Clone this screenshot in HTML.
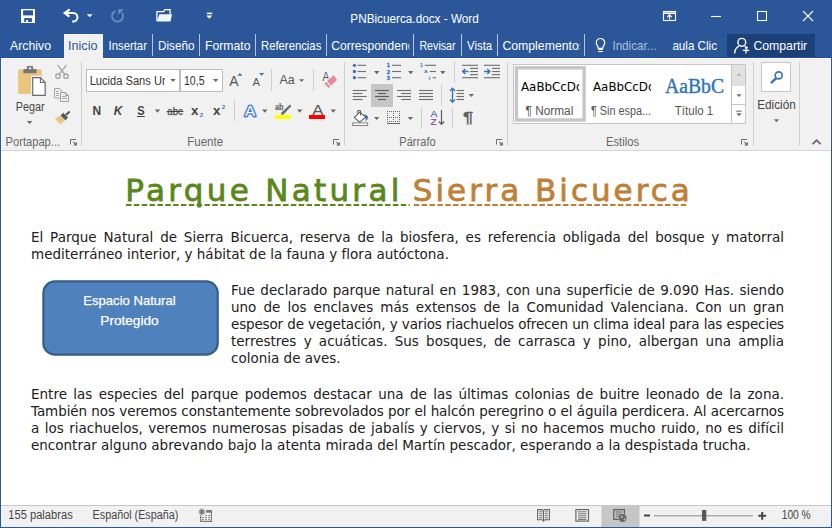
<!DOCTYPE html>
<html lang="es"><head><meta charset="utf-8"><title>PNBicuerca.docx - Word</title>
<style>
*{box-sizing:border-box;margin:0;padding:0}
html,body{width:832px;height:528px;overflow:hidden;background:#fff}
body{position:relative;font-family:"Liberation Sans",sans-serif}
#top{position:absolute;left:0;top:0;width:832px;height:58px;background:#2b579a}
#ribbon{position:absolute;left:1px;top:58px;width:830px;height:93px;background:#f1f1f1;border-bottom:1px solid #d4d4d4}
#bl{position:absolute;left:0;top:57px;width:1px;height:471px;background:#2b579a}
#br{position:absolute;left:831px;top:57px;width:1px;height:471px;background:#2b579a}
#bb{position:absolute;left:0;top:527px;width:832px;height:1px;background:#2b579a}
#status{position:absolute;left:1px;top:505px;width:830px;height:22px;background:#f1f1f1;border-top:1px solid #c8c8c8}
.d{position:absolute;font-family:"DejaVu Sans","Liberation Sans",sans-serif;font-size:13.5px;color:#202020;height:17px;line-height:17px;white-space:nowrap}
.j{white-space:normal;text-align:justify;text-align-last:justify}
#ov{position:absolute;left:0;top:0;width:832px;height:528px}
</style></head><body>
<div id="top"></div><div id="ribbon"></div><div id="status"></div>
<div id="bl"></div><div id="br"></div><div id="bb"></div>
<div class="d j" style="left:31px;top:228.5px;width:753px;">El Parque Natural de Sierra Bicuerca, reserva de la biosfera, es referencia obligada del bosque y matorral</div>
<div class="d" style="left:31px;top:245.5px">mediterráneo interior, y hábitat de la fauna y flora autóctona.</div>
<div class="d j" style="left:231px;top:281.5px;width:553px;">Fue declarado parque natural en 1983, con una superficie de 9.090 Has. siendo</div>
<div class="d j" style="left:231px;top:298.5px;width:553px;">uno de los enclaves más extensos de la Comunidad Valenciana. Con un gran</div>
<div class="d j" style="left:231px;top:315.5px;width:553px;letter-spacing:-0.16px;">espesor de vegetación, y varios riachuelos ofrecen un clima ideal para las especies</div>
<div class="d j" style="left:231px;top:332.5px;width:553px;">terrestres y acuáticas. Sus bosques, de carrasca y pino, albergan una amplia</div>
<div class="d" style="left:231px;top:349.5px">colonia de aves.</div>
<div class="d j" style="left:31px;top:385.5px;width:753px;">Entre las especies del parque podemos destacar una de las últimas colonias de buitre leonado de la zona.</div>
<div class="d j" style="left:31px;top:402.5px;width:753px;letter-spacing:-0.085px;">También nos veremos constantemente sobrevolados por el halcón peregrino o el águila perdicera. Al acercarnos</div>
<div class="d j" style="left:31px;top:419.5px;width:753px;">a los riachuelos, veremos numerosas pisadas de jabalís y ciervos, y si no hacemos mucho ruido, no es difícil</div>
<div class="d" style="left:31px;top:436.5px">encontrar alguno abrevando bajo la atenta mirada del Martín pescador, esperando a la despistada trucha.</div>
<svg id="ov" width="832" height="528" viewBox="0 0 832 528">
<g id="qat" fill="none" stroke="#fff">
<rect x="21" y="9" width="14" height="14" rx=".6" fill="#fff" stroke="none"/>
<rect x="23.100" y="10.300" width="9.900" height="5.100" fill="#2b579a" stroke="none"/>
<rect x="24.200" y="18.100" width="7.700" height="3.900" fill="#2b579a" stroke="none"/>
<rect x="26" y="20.100" width="2.100" height="2" fill="#fff" stroke="none"/>
<path d="M69.700 9.300L64.600 13L69.400 16.700M65 13H73.200A4.250 4.250 0 0 1 73.200 21.500H72.200" stroke-width="2.100"/>
</g>
<path d="M86.8 14.2h5.8l-2.9 3.1z" fill="#fff"/>
<path d="M115.600 10.900A5.500 5.500 0 1 0 121.700 12.500" fill="none" stroke="#6a8bc2" stroke-width="1.800"/><path d="M118.200 9.200h5.600l-5.600 5.600z" fill="#6a8bc2"/>
<path d="M156.900 21V11.600h6.600l1.400-1.900h5.200v4.300" fill="none" stroke="#fff" stroke-width="1.300"/>
<path d="M159.400 14.200h12.700l-1.600 7.400h-13.700z" fill="#f4f4f4"/>
<path d="M206.900 13.400h5.400" stroke="#fff" stroke-width="1.500"/>
<path d="M206.3 15.6h6l-3.0 3.2z" fill="#fff"/>
<g fill="none" stroke="#fff" stroke-width="1.1">
<rect x="663.5" y="11.5" width="12" height="9"/><path d="M663.5 13.2h12" stroke-width="1.6"/><path d="M669.5 19.5v-4.5M667.3 17l2.2-2.2l2.2 2.2"/>
<path d="M711 16.5h10"/>
<rect x="757.5" y="11.5" width="9" height="9"/>
<path d="M803 11l10 10M813 11l-10 10"/>
</g>
<text x="350.3" y="22.8" textLength="128.5" lengthAdjust="spacingAndGlyphs" font-family="Liberation Sans, sans-serif" font-size="12" font-weight="400" fill="#fff">PNBicuerca.docx - Word</text>
<rect x="64" y="34" width="39" height="24.500" fill="#f1f1f1"/>
<text x="10" y="50" textLength="41" lengthAdjust="spacingAndGlyphs" font-family="Liberation Sans, sans-serif" font-size="12.8" font-weight="400" fill="#fff">Archivo</text>
<text x="68" y="50" textLength="29.5" lengthAdjust="spacingAndGlyphs" font-family="Liberation Sans, sans-serif" font-size="12.8" font-weight="400" fill="#2b579a">Inicio</text>
<text x="108.6" y="50" textLength="38.3" lengthAdjust="spacingAndGlyphs" font-family="Liberation Sans, sans-serif" font-size="12.8" font-weight="400" fill="#fff">Insertar</text>
<text x="158" y="50" textLength="36.5" lengthAdjust="spacingAndGlyphs" font-family="Liberation Sans, sans-serif" font-size="12.8" font-weight="400" fill="#fff">Diseño</text>
<text x="205" y="50" textLength="45.5" lengthAdjust="spacingAndGlyphs" font-family="Liberation Sans, sans-serif" font-size="12.8" font-weight="400" fill="#fff">Formato</text>
<text x="261" y="50" textLength="60.3" lengthAdjust="spacingAndGlyphs" font-family="Liberation Sans, sans-serif" font-size="12.8" font-weight="400" fill="#fff">Referencias</text>
<text x="419.4" y="50" textLength="36.2" lengthAdjust="spacingAndGlyphs" font-family="Liberation Sans, sans-serif" font-size="12.8" font-weight="400" fill="#fff">Revisar</text>
<text x="467" y="50" textLength="25.2" lengthAdjust="spacingAndGlyphs" font-family="Liberation Sans, sans-serif" font-size="12.8" font-weight="400" fill="#fff">Vista</text>
<text x="612.4" y="50" textLength="44" lengthAdjust="spacingAndGlyphs" font-family="Liberation Sans, sans-serif" font-size="12.8" font-weight="400" fill="#aebfde">Indicar...</text>
<text x="672.4" y="50" textLength="44.6" lengthAdjust="spacingAndGlyphs" font-family="Liberation Sans, sans-serif" font-size="12.8" font-weight="400" fill="#fff">aula Clic</text>
<clipPath id="c1"><rect x="330" y="34" width="79.4" height="24"/></clipPath>
<g clip-path="url(#c1)"><text x="331.2" y="50" textLength="92" lengthAdjust="spacingAndGlyphs" font-family="Liberation Sans, sans-serif" font-size="12.8" font-weight="400" fill="#fff">Correspondencia</text></g>
<clipPath id="c2"><rect x="500" y="34" width="79.6" height="24"/></clipPath>
<g clip-path="url(#c2)"><text x="502.4" y="50" textLength="82.5" lengthAdjust="spacingAndGlyphs" font-family="Liberation Sans, sans-serif" font-size="12.8" font-weight="400" fill="#fff">Complementos</text></g>
<rect x="152.0" y="34" width="1" height="22" fill="#b8c6e0"/>
<rect x="199.0" y="34" width="1" height="22" fill="#b8c6e0"/>
<rect x="255.0" y="34" width="1" height="22" fill="#b8c6e0"/>
<rect x="326.0" y="34" width="1" height="22" fill="#b8c6e0"/>
<rect x="413.0" y="34" width="1" height="22" fill="#b8c6e0"/>
<rect x="461.0" y="34" width="1" height="22" fill="#b8c6e0"/>
<rect x="497.0" y="34" width="1" height="22" fill="#b8c6e0"/>
<rect x="584.0" y="34" width="1" height="22" fill="#b8c6e0"/>
<g fill="none" stroke="#fff" stroke-width="1.200"><path d="M598.300 48.300c0-2-2-3-2-5.600a4.200 4.200 0 0 1 8.400 0c0 2.600-2 3.600-2 5.600z"/><path d="M598.200 51.500h4.600"/></g><rect x="598.200" y="48" width="4.600" height="1.900" fill="#fff"/>
<rect x="727" y="34" width="88" height="23" fill="#1c4078"/>
<g fill="none" stroke="#fff" stroke-width="1.400"><circle cx="741.800" cy="42.300" r="3.900"/><path d="M734.600 53.400c.300-4.100 2.200-6.500 4.700-7.300M744.600 46.300c1.300.400 2.300 1.100 3.100 2"/><path d="M742.800 50.400h6.400M746 47.200v6.400" stroke-width="1.300"/></g>
<text x="753.4" y="50" textLength="53.8" lengthAdjust="spacingAndGlyphs" font-family="Liberation Sans, sans-serif" font-size="12.8" font-weight="400" fill="#fff">Compartir</text>
<rect x="1" y="58" width="63" height="1" fill="#fbfaf6"/><rect x="103" y="58" width="728" height="1" fill="#fbfaf6"/><rect x="1" y="58" width="1" height="92" fill="#fbfaf6"/><rect x="830" y="58" width="1" height="92" fill="#fbfaf6"/>
<rect x="103" y="57" width="728" height="1" fill="#22509a"/><rect x="1" y="57" width="63" height="1" fill="#22509a"/>
<rect x="18.200" y="69.200" width="23.600" height="24.800" rx="1.800" fill="#ebc47f"/>
<path d="M23.400 73.200v-3.300a.8.8 0 0 1 .8-.8h2.700v-2.200a.8.8 0 0 1 .8-.8h4.600a.8.8 0 0 1 .8.800v2.200h2.700a.8.8 0 0 1 .8.800v3.300z" fill="#777"/>
<rect x="28.800" y="67.400" width="2.400" height="1.800" fill="#f1f1f1"/>
<path d="M31 75.800h10l5.900 5.900v15.400h-15.900z" fill="#f1f1f1"/>
<path d="M32.700 77.700h7.700l4.800 4.800v12.800h-12.500z" fill="#fff" stroke="#6a6a6a" stroke-width="1.200"/>
<path d="M40.400 77.700v4.800h4.800" fill="none" stroke="#6a6a6a" stroke-width="1.100"/>
<text x="15.7" y="110.5" textLength="28.8" lengthAdjust="spacingAndGlyphs" font-family="Liberation Sans, sans-serif" font-size="12" font-weight="400" fill="#444444">Pegar</text>
<path d="M26.9 121h5.4l-2.7 3z" fill="#666"/>
<g fill="none" stroke="#a3a3a3" stroke-width="1.3"><path d="M57.600 65.200l7.300 9.300M66.400 65.200l-7.300 9.300"/><circle cx="58" cy="76.200" r="2.200"/><circle cx="66" cy="76.200" r="2.200"/></g>
<g fill="#f1f1f1" stroke="#a3a3a3" stroke-width="1"><path d="M54.500 88.500h5l2.500 2.500v7h-7.500z"/><path d="M60.500 92.500h5l3 3v6h-8z"/><path d="M65.500 92.500v3h3" fill="none"/><path d="M56 91.500h3M56 93.500h3M56 95.500h3M62 96.500h4.500M62 98.500h5" fill="none" stroke-width=".9"/></g>
<path d="M54.800 118.700l6.600-3.400 4.300 4.400-5.300 4.600z" fill="#ebc47f"/>
<path d="M60.600 115.400l2.500-2.600 5 4.700-2.600 2.700z" fill="#595959"/>
<path d="M65.200 114.300l3.700-3.600 1.500 1.500-3.700 3.600z" fill="#595959"/>
<text x="5.6" y="146" textLength="54.5" lengthAdjust="spacingAndGlyphs" font-family="Liberation Sans, sans-serif" font-size="12" font-weight="400" fill="#666">Portapap...</text>
<path d="M70.5 144.6v-5.100h5.600" fill="none" stroke="#6e6e6e" stroke-width="1"/><path d="M77 141.8v3.800h-3.800z" fill="#6e6e6e"/><path d="M73.4 142.0l2.600 2.600" stroke="#6e6e6e" stroke-width="1.100" fill="none"/>
<rect x="81.0" y="62" width="1" height="83.5" fill="#cfcfcf"/>
<rect x="86.500" y="69.500" width="93" height="22" fill="#fff" stroke="#bdbdbd"/>
<rect x="180.500" y="69.500" width="42" height="22" fill="#fff" stroke="#bdbdbd"/>
<clipPath id="c3"><rect x="88" y="70" width="77" height="21"/></clipPath>
<g clip-path="url(#c3)"><text x="89.7" y="85" textLength="105" lengthAdjust="spacingAndGlyphs" font-family="Liberation Sans, sans-serif" font-size="12.5" font-weight="400" fill="#333">Lucida Sans Unicode</text></g>
<path d="M170.3 78.9h5.4l-2.7 3.2z" fill="#686868"/>
<text x="184" y="85" textLength="20.5" lengthAdjust="spacingAndGlyphs" font-family="Liberation Sans, sans-serif" font-size="12.5" font-weight="400" fill="#333">10,5</text>
<path d="M213.0 78.9h5.4l-2.7 3.2z" fill="#686868"/>
<text x="229.3" y="85.5" textLength="9.3" lengthAdjust="spacingAndGlyphs" font-family="Liberation Sans, sans-serif" font-size="14.5" font-weight="400" fill="#555">A</text>
<path d="M237.300 75.800l2.600-2.900 2.600 2.900z" fill="#3b73b9"/>
<text x="252.5" y="85.5" textLength="7.4" lengthAdjust="spacingAndGlyphs" font-family="Liberation Sans, sans-serif" font-size="11.5" font-weight="400" fill="#555">A</text>
<path d="M259 72.900h5.200l-2.600 2.900z" fill="#3b73b9"/>
<rect x="271.0" y="69" width="1" height="22" fill="#cfcfcf"/>
<text x="279.5" y="84.2" textLength="15.2" lengthAdjust="spacingAndGlyphs" font-family="Liberation Sans, sans-serif" font-size="13" font-weight="400" fill="#555">Aa</text>
<path d="M299 79.2h5.2l-2.6 2.8z" fill="#6f6f6f"/>
<rect x="313.0" y="69" width="1" height="22" fill="#cfcfcf"/>
<text x="322.6" y="81.2" textLength="6.8" lengthAdjust="spacingAndGlyphs" font-family="Liberation Sans, sans-serif" font-size="12" font-weight="400" fill="#555">A</text>
<path d="M333.800 74.900l3.600 4.900-8.800 8.300-4.600-4.900z" fill="#f1f1f1" stroke="#f1f1f1" stroke-width="1.200"/>
<path d="M333.800 75.200l3.300 4.700-6 5.700-4-4.500z" fill="#e8879c"/><path d="M326.300 81.900l4 4.500-1.800 1.600-4.200-4.700z" fill="#e8879c"/>
<text x="92.6" y="114.8" textLength="8.6" lengthAdjust="spacingAndGlyphs" font-family="Liberation Sans, sans-serif" font-size="12.5" font-weight="700" fill="#444">N</text>
<text x="113.8" y="114.8" textLength="8.6" lengthAdjust="spacingAndGlyphs" font-family="Liberation Sans, sans-serif" font-size="12.5" font-weight="700" fill="#444" font-style="italic">K</text>
<text x="137.2" y="114.8" textLength="7.4" lengthAdjust="spacingAndGlyphs" font-family="Liberation Sans, sans-serif" font-size="12.5" font-weight="700" fill="#444">S</text>
<rect x="137" y="116" width="7.800" height="1" fill="#444"/>
<path d="M154.8 109.5h5.4l-2.7 3.2z" fill="#686868"/>
<text x="167.3" y="114.8" textLength="15.5" lengthAdjust="spacingAndGlyphs" font-family="Liberation Sans, sans-serif" font-size="11.5" font-weight="400" fill="#444" stroke="#444" stroke-width=".250">abc</text>
<rect x="166.700" y="111" width="16.700" height="1" fill="#444"/>
<text x="191" y="114.9" textLength="7.4" lengthAdjust="spacingAndGlyphs" font-family="Liberation Sans, sans-serif" font-size="13" font-weight="700" fill="#444">x</text>
<text x="199.7" y="117.1" textLength="3.4" lengthAdjust="spacingAndGlyphs" font-family="Liberation Sans, sans-serif" font-size="5.9" font-weight="700" fill="#3b73b9">2</text>
<text x="213.1" y="114.9" textLength="7.4" lengthAdjust="spacingAndGlyphs" font-family="Liberation Sans, sans-serif" font-size="13" font-weight="700" fill="#444">x</text>
<text x="221.8" y="109" textLength="3.4" lengthAdjust="spacingAndGlyphs" font-family="Liberation Sans, sans-serif" font-size="5.9" font-weight="700" fill="#3b73b9">2</text>
<rect x="234.0" y="100" width="1" height="21.5" fill="#cfcfcf"/>
<text x="245" y="115.500" textLength="10.200" lengthAdjust="spacingAndGlyphs" font-family="Liberation Sans, sans-serif" font-size="14.500" font-weight="400" fill="none" stroke="#9cc0ea" stroke-width="4.200" stroke-opacity=".45" stroke-linejoin="round">A</text>
<text x="245" y="115.500" textLength="10.200" lengthAdjust="spacingAndGlyphs" font-family="Liberation Sans, sans-serif" font-size="14.500" font-weight="400" fill="#fff" stroke="#3f7cc6" stroke-width="2.500" stroke-linejoin="round" paint-order="stroke">A</text>
<path d="M262.1 109.5h5.4l-2.7 3.2z" fill="#686868"/>
<text x="275" y="110.2" textLength="8.6" lengthAdjust="spacingAndGlyphs" font-family="Liberation Sans, sans-serif" font-size="9.5" font-weight="700" fill="#555">ab</text>
<path d="M289.600 103.900l2.200 1.800-8.400 9.200-3.400-1.300z" fill="#f1f1f1"/>
<path d="M289.900 104.600l1.500 1.400-7.600 8.200-3 .9.900-2.900z" fill="#6a6a6a"/>
<rect x="275" y="115" width="16" height="4" fill="#ffff00"/>
<path d="M297.0 109.5h5.4l-2.7 3.2z" fill="#686868"/>
<text x="312.3" y="114.6" textLength="11.2" lengthAdjust="spacingAndGlyphs" font-family="Liberation Sans, sans-serif" font-size="14" font-weight="400" fill="#555">A</text>
<rect x="309" y="115" width="16" height="4" fill="#ff0000"/>
<path d="M330.6 109.5h5.4l-2.7 3.2z" fill="#686868"/>
<text x="187.3" y="146" textLength="35.8" lengthAdjust="spacingAndGlyphs" font-family="Liberation Sans, sans-serif" font-size="12" font-weight="400" fill="#666">Fuente</text>
<path d="M333.5 144.6v-5.100h5.600" fill="none" stroke="#6e6e6e" stroke-width="1"/><path d="M340 141.8v3.800h-3.800z" fill="#6e6e6e"/><path d="M336.4 142.0l2.600 2.600" stroke="#6e6e6e" stroke-width="1.100" fill="none"/>
<rect x="344.0" y="62" width="1" height="83.5" fill="#cfcfcf"/>
<circle cx="354.400" cy="65.3" r="1.650" fill="#3b73b9"/>
<rect x="357.6" y="64.75" width="8.4" height="1.1" fill="#6f6f6f"/>
<circle cx="354.400" cy="71.5" r="1.650" fill="#3b73b9"/>
<rect x="357.6" y="70.95" width="8.4" height="1.1" fill="#6f6f6f"/>
<circle cx="354.400" cy="77.7" r="1.650" fill="#3b73b9"/>
<rect x="357.6" y="77.15" width="8.4" height="1.1" fill="#6f6f6f"/>
<path d="M374.1 71.0h5.4l-2.7 3.2z" fill="#686868"/>
<text x="386.8" y="67.4" textLength="3.2" lengthAdjust="spacingAndGlyphs" font-family="Liberation Sans, sans-serif" font-size="5.9" font-weight="700" fill="#3b73b9" stroke="#3b73b9" stroke-width=".300">1</text>
<rect x="392" y="64.75000000000001" width="9" height="1.1" fill="#6f6f6f"/>
<text x="386.8" y="73.6" textLength="3.2" lengthAdjust="spacingAndGlyphs" font-family="Liberation Sans, sans-serif" font-size="5.9" font-weight="700" fill="#3b73b9" stroke="#3b73b9" stroke-width=".300">2</text>
<rect x="392" y="70.95" width="9" height="1.1" fill="#6f6f6f"/>
<text x="386.8" y="79.8" textLength="3.2" lengthAdjust="spacingAndGlyphs" font-family="Liberation Sans, sans-serif" font-size="5.9" font-weight="700" fill="#3b73b9" stroke="#3b73b9" stroke-width=".300">3</text>
<rect x="392" y="77.15" width="9" height="1.1" fill="#6f6f6f"/>
<path d="M408.0 71.0h5.4l-2.7 3.2z" fill="#686868"/>
<text x="420" y="67.4" textLength="3" lengthAdjust="spacingAndGlyphs" font-family="Liberation Sans, sans-serif" font-size="5.9" font-weight="700" fill="#3b73b9">1</text>
<rect x="424.8" y="64.75" width="11.2" height="1.1" fill="#6f6f6f"/>
<text x="424.3" y="73.4" textLength="3.2" lengthAdjust="spacingAndGlyphs" font-family="Liberation Sans, sans-serif" font-size="6" font-weight="700" fill="#3b73b9">a</text>
<rect x="429.8" y="70.95" width="6.2" height="1.1" fill="#6f6f6f"/>
<text x="428.8" y="79.8" textLength="1.6" lengthAdjust="spacingAndGlyphs" font-family="Liberation Sans, sans-serif" font-size="6" font-weight="700" fill="#3b73b9">i</text>
<rect x="432.6" y="77.15" width="3.4" height="1.1" fill="#6f6f6f"/>
<path d="M440.1 71.0h5.4l-2.7 3.2z" fill="#686868"/>
<rect x="454.0" y="61.5" width="1" height="21.0" fill="#cfcfcf"/>
<rect x="462" y="64.75" width="16" height="1.1" fill="#6f6f6f"/><rect x="462" y="77.15" width="16" height="1.1" fill="#6f6f6f"/><rect x="470" y="67.85000000000001" width="8" height="1.1" fill="#6f6f6f"/><rect x="470" y="70.95" width="8" height="1.1" fill="#6f6f6f"/><rect x="470" y="74.05" width="8" height="1.1" fill="#6f6f6f"/><path d="M468.5 71.500h-5.500M465.3 69l-2.600 2.500 2.600 2.500" fill="none" stroke="#3b73b9" stroke-width="1.500"/>
<rect x="484" y="64.75" width="16" height="1.1" fill="#6f6f6f"/><rect x="484" y="77.15" width="16" height="1.1" fill="#6f6f6f"/><rect x="492" y="67.85000000000001" width="8" height="1.1" fill="#6f6f6f"/><rect x="492" y="70.95" width="8" height="1.1" fill="#6f6f6f"/><rect x="492" y="74.05" width="8" height="1.1" fill="#6f6f6f"/><path d="M484 71.500h5.500M487.3 69l2.600 2.500-2.600 2.500" fill="none" stroke="#3b73b9" stroke-width="1.500"/>
<rect x="371" y="84" width="22" height="23" fill="#c6c6c6"/>
<rect x="352.7" y="89.95" width="14.0" height="1.1" fill="#6f6f6f"/>
<rect x="375" y="89.95" width="14" height="1.1" fill="#5e5e5e"/>
<rect x="397" y="89.95" width="14" height="1.1" fill="#6f6f6f"/>
<rect x="419" y="89.95" width="14" height="1.1" fill="#6f6f6f"/>
<rect x="352.7" y="92.95" width="9.8" height="1.1" fill="#6f6f6f"/>
<rect x="378" y="92.95" width="8" height="1.1" fill="#5e5e5e"/>
<rect x="401.2" y="92.95" width="9.8" height="1.1" fill="#6f6f6f"/>
<rect x="419" y="92.95" width="14" height="1.1" fill="#6f6f6f"/>
<rect x="352.7" y="95.95" width="14.0" height="1.1" fill="#6f6f6f"/>
<rect x="375" y="95.95" width="14" height="1.1" fill="#5e5e5e"/>
<rect x="397" y="95.95" width="14" height="1.1" fill="#6f6f6f"/>
<rect x="419" y="95.95" width="14" height="1.1" fill="#6f6f6f"/>
<rect x="352.7" y="98.95" width="9.8" height="1.1" fill="#6f6f6f"/>
<rect x="378" y="98.95" width="8" height="1.1" fill="#5e5e5e"/>
<rect x="401.2" y="98.95" width="9.8" height="1.1" fill="#6f6f6f"/>
<rect x="419" y="98.95" width="14" height="1.1" fill="#6f6f6f"/>
<rect x="441.0" y="84" width="1" height="21.5" fill="#cfcfcf"/>
<path d="M452.500 88.500v13.500M450 91l2.500-2.700 2.500 2.700M450 99.500l2.500 2.700 2.500-2.700" fill="none" stroke="#3b73b9" stroke-width="1.300"/>
<rect x="456.5" y="89.95" width="7.5" height="1.1" fill="#6f6f6f"/>
<rect x="456.5" y="92.95" width="7.5" height="1.1" fill="#6f6f6f"/>
<rect x="456.5" y="95.95" width="7.5" height="1.1" fill="#6f6f6f"/>
<rect x="456.5" y="98.95" width="7.5" height="1.1" fill="#6f6f6f"/>
<path d="M468.6 93.9h5.4l-2.7 3.2z" fill="#686868"/>
<path d="M364 114.200c2.600.300 4.300 1.700 4 3.600-.300 1.500-1.300 2.600-2.600 3.500l.300-3.800z" fill="#3b73b9"/>
<path d="M359.900 112.100l5.800 5-6.100 5-5.300-4.700z" fill="#fff" stroke="#5a5a5a" stroke-width="1.100" stroke-linejoin="round"/>
<path d="M357.700 113.300v-2.700h2.900v5" fill="none" stroke="#5a5a5a" stroke-width="1"/>
<rect x="352.700" y="122.900" width="15" height="2.700" fill="#fff" stroke="#777" stroke-width=".900"/>
<path d="M374.0 116.9h5.4l-2.7 3.2z" fill="#686868"/>
<path d="M387 111h1v1h-1zM387 113h1v1h-1zM387 115h1v1h-1zM387 117h1v1h-1zM387 119h1v1h-1zM387 121h1v1h-1zM389 111h1v1h-1zM389 117h1v1h-1zM389 121h1v1h-1zM391 111h1v1h-1zM391 117h1v1h-1zM391 121h1v1h-1zM393 111h1v1h-1zM393 113h1v1h-1zM393 115h1v1h-1zM393 117h1v1h-1zM393 119h1v1h-1zM393 121h1v1h-1zM395 111h1v1h-1zM395 117h1v1h-1zM395 121h1v1h-1zM397 111h1v1h-1zM397 117h1v1h-1zM397 121h1v1h-1zM399 111h1v1h-1zM399 113h1v1h-1zM399 115h1v1h-1zM399 117h1v1h-1zM399 119h1v1h-1zM399 121h1v1h-1z" fill="#666"/>
<rect x="387" y="123.0" width="13" height="1" fill="#666"/>
<path d="M407.8 116.9h5.4l-2.7 3.2z" fill="#686868"/>
<rect x="421.0" y="107" width="1" height="22" fill="#cfcfcf"/>
<text x="430.5" y="116.8" textLength="6.8" lengthAdjust="spacingAndGlyphs" font-family="Liberation Sans, sans-serif" font-size="9.8" font-weight="400" fill="#3b73b9" stroke="#3b73b9" stroke-width=".200">A</text>
<text x="430.6" y="125" textLength="6.2" lengthAdjust="spacingAndGlyphs" font-family="Liberation Sans, sans-serif" font-size="9.4" font-weight="400" fill="#8b4aa8" stroke="#8b4aa8" stroke-width=".200">Z</text>
<path d="M441.500 110v14M438.900 121.500l2.600 2.800 2.600-2.800" fill="none" stroke="#5a5a5a" stroke-width="1.200"/>
<rect x="452.0" y="107" width="1" height="22" fill="#cfcfcf"/>
<text x="463" y="121.7" textLength="10.3" lengthAdjust="spacingAndGlyphs" font-family="Liberation Sans, sans-serif" font-size="14" font-weight="400" fill="#606060" stroke="#606060" stroke-width=".350">¶</text>
<text x="399.3" y="146" textLength="36.4" lengthAdjust="spacingAndGlyphs" font-family="Liberation Sans, sans-serif" font-size="12" font-weight="400" fill="#666">Párrafo</text>
<path d="M496.5 144.6v-5.100h5.600" fill="none" stroke="#6e6e6e" stroke-width="1"/><path d="M503 141.8v3.800h-3.800z" fill="#6e6e6e"/><path d="M499.4 142.0l2.600 2.600" stroke="#6e6e6e" stroke-width="1.100" fill="none"/>
<rect x="507.0" y="62" width="1" height="83.5" fill="#cfcfcf"/>
<rect x="513.500" y="64.500" width="232" height="59" fill="#fff" stroke="#c6c6c6"/>
<rect x="516.500" y="67.800" width="67.600" height="52.200" fill="#fff" stroke="#c6c6c6" stroke-width="3.400"/>
<clipPath id="c4"><rect x="518" y="70" width="61.200" height="30"/></clipPath>
<g clip-path="url(#c4)"><text x="521" y="90.8" textLength="62.5" lengthAdjust="spacingAndGlyphs" font-family="DejaVu Sans, sans-serif" font-size="11.6" font-weight="400" fill="#000">AaBbCcDd</text></g>
<clipPath id="c5"><rect x="590" y="70" width="61" height="30"/></clipPath>
<g clip-path="url(#c5)"><text x="593" y="90.8" textLength="62.5" lengthAdjust="spacingAndGlyphs" font-family="DejaVu Sans, sans-serif" font-size="11.6" font-weight="400" fill="#000">AaBbCcDd</text></g>
<text x="525.5" y="114.7" textLength="47.8" lengthAdjust="spacingAndGlyphs" font-family="Liberation Sans, sans-serif" font-size="12" font-weight="400" fill="#555">¶ Normal</text>
<text x="591" y="114.7" textLength="60" lengthAdjust="spacingAndGlyphs" font-family="Liberation Sans, sans-serif" font-size="12" font-weight="400" fill="#555">¶ Sin espa...</text>
<text x="665" y="92.6" textLength="59" lengthAdjust="spacingAndGlyphs" font-family="Liberation Serif, sans-serif" font-size="20" font-weight="400" fill="#2e74b5" stroke="#2e74b5" stroke-width=".400">AaBbC</text>
<text x="674.8" y="114.7" textLength="38.4" lengthAdjust="spacingAndGlyphs" font-family="Liberation Sans, sans-serif" font-size="12" font-weight="400" fill="#555">Título 1</text>
<rect x="731.500" y="64.500" width="14" height="59" fill="#fff" stroke="#c6c6c6"/>
<rect x="732" y="65" width="13" height="19.500" fill="#e1e1e1"/>
<rect x="731.5" y="84.5" width="14.0" height="1" fill="#c6c6c6"/>
<rect x="731.5" y="104.0" width="14.0" height="1" fill="#c6c6c6"/>
<path d="M736.500 75.800h5l-2.500-2.800z" fill="#b5b5b5"/>
<path d="M736.3 94.2h5.4l-2.7 2.9z" fill="#6f6f6f"/>
<rect x="736.3" y="110.65" width="5.4" height="1.1" fill="#6f6f6f"/>
<path d="M736.3 113.3h5.4l-2.7 3z" fill="#6f6f6f"/>
<text x="606" y="146" textLength="33" lengthAdjust="spacingAndGlyphs" font-family="Liberation Sans, sans-serif" font-size="12" font-weight="400" fill="#666">Estilos</text>
<path d="M741.5 144.6v-5.100h5.600" fill="none" stroke="#6e6e6e" stroke-width="1"/><path d="M748 141.8v3.800h-3.800z" fill="#6e6e6e"/><path d="M744.4 142.0l2.600 2.600" stroke="#6e6e6e" stroke-width="1.100" fill="none"/>
<rect x="753.0" y="62" width="1" height="83.5" fill="#cfcfcf"/>
<rect x="761.500" y="62.500" width="29" height="29" fill="#fff" stroke="#c6c6c6"/>
<circle cx="778.700" cy="75.300" r="3.500" fill="none" stroke="#3b73b9" stroke-width="1.700"/><path d="M776.200 78.200l-5.200 5" stroke="#3b73b9" stroke-width="2.400" fill="none"/>
<text x="757.2" y="109" textLength="38.6" lengthAdjust="spacingAndGlyphs" font-family="Liberation Sans, sans-serif" font-size="12" font-weight="400" fill="#444444">Edición</text>
<path d="M773.8 119.3h5.4l-2.7 2.9z" fill="#6f6f6f"/>
<rect x="799.0" y="62" width="1" height="83.5" fill="#cfcfcf"/>
<path d="M812.600 144.200l4-4 4 4" fill="none" stroke="#666" stroke-width="1.800"/>
<text x="125.3" y="200.5" textLength="274" lengthAdjust="spacing" font-family="DejaVu Sans, sans-serif" font-size="31" fill="#59881a" stroke="#59881a" stroke-width=".8">Parque Natural</text>
<text x="412.8" y="200.5" textLength="277" lengthAdjust="spacing" font-family="DejaVu Sans, sans-serif" font-size="31" fill="#bf7f36" stroke="#bf7f36" stroke-width=".8">Sierra Bicuerca</text>
<path d="M126 205H409.800" stroke="#59881a" stroke-width="2" stroke-dasharray="5.500 2.350" fill="none"/>
<path d="M413.800 205H687.500" stroke="#bf7f36" stroke-width="2" stroke-dasharray="5.500 2.350" fill="none"/>
<rect x="43.400" y="281.400" width="174.300" height="73.300" rx="11.500" fill="#4f81bd" stroke="#385d8a" stroke-width="2.200"/>
<text x="83.3" y="305" textLength="92.3" lengthAdjust="spacingAndGlyphs" font-family="Liberation Sans, sans-serif" font-size="13.3" font-weight="400" fill="#fff" stroke="#fff" stroke-width=".250">Espacio Natural</text>
<text x="100.3" y="325" textLength="58.3" lengthAdjust="spacingAndGlyphs" font-family="Liberation Sans, sans-serif" font-size="13.3" font-weight="400" fill="#fff" stroke="#fff" stroke-width=".250">Protegido</text>
<text x="8.3" y="519.4" textLength="64.4" lengthAdjust="spacingAndGlyphs" font-family="Liberation Sans, sans-serif" font-size="12" font-weight="400" fill="#444444">155 palabras</text>
<text x="92.6" y="519.4" textLength="85.7" lengthAdjust="spacingAndGlyphs" font-family="Liberation Sans, sans-serif" font-size="12" font-weight="400" fill="#444444">Español (España)</text>
<text x="781.7" y="519.4" textLength="29" lengthAdjust="spacingAndGlyphs" font-family="Liberation Sans, sans-serif" font-size="12" font-weight="400" fill="#444444">100 %</text>
<path d="M200.700 513.500v7.800h10.700v-10.700h-5.400" fill="none" stroke="#7a7a7a" stroke-width="1.200"/>
<rect x="206" y="510" width="6" height="2.700" fill="#7a7a7a"/>
<circle cx="201.900" cy="511.900" r="3.300" fill="#808080" stroke="#f1f1f1" stroke-width=".900"/>
<path d="M205.200 515.500h1.700M208.200 515.500h1.700M202.200 517.400h1.700M205.200 517.400h1.700M208.200 517.400h1.700M202.200 519.400h1.700M205.200 519.400h1.700M208.200 519.400h1.700" stroke="#7a7a7a" stroke-width="1" fill="none"/>
<rect x="601.500" y="506" width="38" height="21" fill="#c6c6c6"/>
<g fill="none" stroke="#666" stroke-width="1.100"><path d="M537.600 509.600h4.600l1.300 1 1.300-1h4.600v10.200h-4.600l-1.300 1-1.300-1h-4.600z"/><path d="M543.500 510.500v11"/><path d="M539.200 511.800h3.200M539.200 513.800h3.200M539.200 515.800h3.200M539.200 517.800h3.200M544.700 511.800h3.200M544.700 513.800h3.200M544.700 515.800h3.200M544.700 517.800h3.200" stroke-width=".900"/></g>
<g fill="#f1f1f1" stroke="#666" stroke-width="1.200"><rect x="575.900" y="509.600" width="12.600" height="11.500"/><path d="M578 511.800h8.400M578 513.800h8.400M578 515.800h8.400M578 517.800h8.400M578 519.500h8.400" stroke-width=".900"/></g>
<g fill="none" stroke="#5e5e5e" stroke-width="1.200"><path d="M618.500 519.300h-4.700v-9.700h10.600v4.500"/><path d="M615.800 512h6.600M615.800 514.200h5.500M615.800 516.400h3" stroke-width=".900"/></g>
<circle cx="622.600" cy="518" r="3.900" fill="#666"/><path d="M620.300 516.500l1.800-.900 1.200 1.300-1.600 1.400zM623.400 518.600l1.800-.600.300 1.800-1.300.900z" fill="#aaa"/>
<rect x="644" y="514.500" width="6" height="2" fill="#444"/>
<rect x="654" y="515.300" width="99" height="1" fill="#8c8c8c"/>
<rect x="702" y="510" width="4.300" height="10.900" fill="#595959"/>
<path d="M758.300 515.800h7.800M762.200 511.900v7.800" stroke="#444" stroke-width="2" fill="none"/>
</svg>
</body></html>
